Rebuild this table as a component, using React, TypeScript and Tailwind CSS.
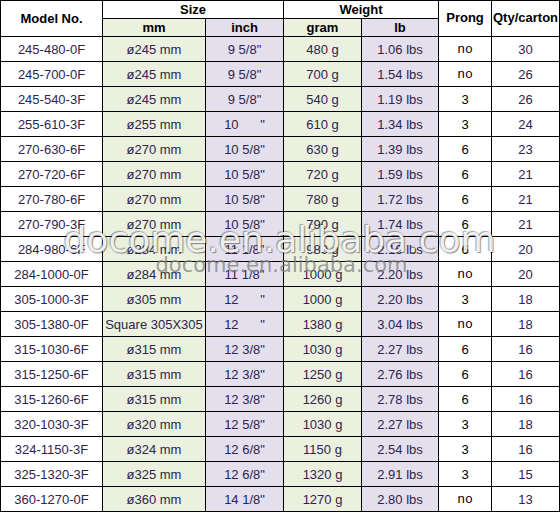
import React from 'react'

type Row = [string, string, string, string, string, string, string]

const rows: Row[] = [
  ['245-480-0F', 'ø245 mm', '9 5/8"', '480 g', '1.06 lbs', 'no', '30'],
  ['245-700-0F', 'ø245 mm', '9 5/8"', '700 g', '1.54 lbs', 'no', '26'],
  ['245-540-3F', 'ø245 mm', '9 5/8"', '540 g', '1.19 lbs', '3', '26'],
  ['255-610-3F', 'ø255 mm', '10      "', '610 g', '1.34 lbs', '3', '24'],
  ['270-630-6F', 'ø270 mm', '10 5/8"', '630 g', '1.39 lbs', '6', '23'],
  ['270-720-6F', 'ø270 mm', '10 5/8"', '720 g', '1.59 lbs', '6', '21'],
  ['270-780-6F', 'ø270 mm', '10 5/8"', '780 g', '1.72 lbs', '6', '21'],
  ['270-790-3F', 'ø270 mm', '10 5/8"', '790 g', '1.74 lbs', '6', '21'],
  ['284-980-6F', 'ø284 mm', '11 1/8"', '980 g', '2.16 lbs', '6', '20'],
  ['284-1000-0F', 'ø284 mm', '11 1/8"', '1000 g', '2.20 lbs', 'no', '20'],
  ['305-1000-3F', 'ø305 mm', '12      "', '1000 g', '2.20 lbs', '3', '18'],
  ['305-1380-0F', 'Square 305X305', '12      "', '1380 g', '3.04 lbs', 'no', '18'],
  ['315-1030-6F', 'ø315 mm', '12 3/8"', '1030 g', '2.27 lbs', '6', '16'],
  ['315-1250-6F', 'ø315 mm', '12 3/8"', '1250 g', '2.76 lbs', '6', '16'],
  ['315-1260-6F', 'ø315 mm', '12 3/8"', '1260 g', '2.78 lbs', '6', '16'],
  ['320-1030-3F', 'ø320 mm', '12 5/8"', '1030 g', '2.27 lbs', '3', '18'],
  ['324-1150-3F', 'ø324 mm', '12 6/8"', '1150 g', '2.54 lbs', '3', '16'],
  ['325-1320-3F', 'ø325 mm', '12 6/8"', '1320 g', '2.91 lbs', '3', '15'],
  ['360-1270-0F', 'ø360 mm', '14 1/8"', '1270 g', '2.80 lbs', 'no', '13'],
]

const green = 'bg-[#ebf1de]'
const lilac = 'bg-[#e4dfec]'
const cell = 'border border-black text-center p-0 whitespace-pre'

export default function App() {
  return (
    <div className="relative w-[560px] h-[516px] bg-white font-['Liberation_Sans',Arial,sans-serif] text-[13px] leading-none">
      <table className="table-fixed border-collapse w-[559px]">
        <colgroup>
          <col className="w-[102px]" />
          <col className="w-[103px]" />
          <col className="w-[78px]" />
          <col className="w-[78px]" />
          <col className="w-[77px]" />
          <col className="w-[53px]" />
          <col className="w-[68px]" />
        </colgroup>
        <thead className="font-bold text-black">
          <tr className="h-[18px]">
            <th rowSpan={2} className={cell}>Model No.</th>
            <th colSpan={2} className={cell}>Size</th>
            <th colSpan={2} className={cell}>Weight</th>
            <th rowSpan={2} className={`${cell} pb-[2px]`}>Prong</th>
            <th rowSpan={2} className={`${cell} pb-[2px]`}>Qty/carton</th>
          </tr>
          <tr className="h-[18px]">
            <th className={`${cell} ${green}`}>mm</th>
            <th className={`${cell} ${lilac}`}>inch</th>
            <th className={`${cell} ${green}`}>gram</th>
            <th className={`${cell} ${lilac}`}>lb</th>
          </tr>
        </thead>
        <tbody className="text-[#2f2350]">
          {rows.map((r, i) => (
            <tr key={i} className="h-[25px]">
              <td className={cell}>{r[0]}</td>
              <td className={`${cell} ${green}`}>{r[1]}</td>
              <td className={`${cell} ${lilac}`}>{r[2]}</td>
              <td className={`${cell} ${green}`}>{r[3]}</td>
              <td className={`${cell} ${lilac}`}>{r[4]}</td>
              <td className={`${cell} text-black`}>
                {r[5] === 'no' ? (
                  <span className="font-['Liberation_Mono',monospace] text-[13px]">no</span>
                ) : (
                  r[5]
                )}
              </td>
              <td className={cell}>{r[6]}</td>
            </tr>
          ))}
        </tbody>
      </table>

      {/* watermark */}
      <div className="pointer-events-none absolute left-[2px] w-[559px] top-[255px] text-center font-['DejaVu_Sans',sans-serif] text-[21px] leading-none text-[#808080]/75">
        docome.en.alibaba.com
      </div>
      <div className="pointer-events-none absolute left-0 w-[559px] top-[222px] text-center font-['DejaVu_Sans',sans-serif] text-[36px] leading-none text-white/90 [text-shadow:1px_1px_1px_rgba(0,0,0,0.4),-1px_-1px_1px_rgba(0,0,0,0.3),0_0_2px_rgba(0,0,0,0.25)]">
        docome.en.alibaba.com
      </div>
    </div>
  )
}
